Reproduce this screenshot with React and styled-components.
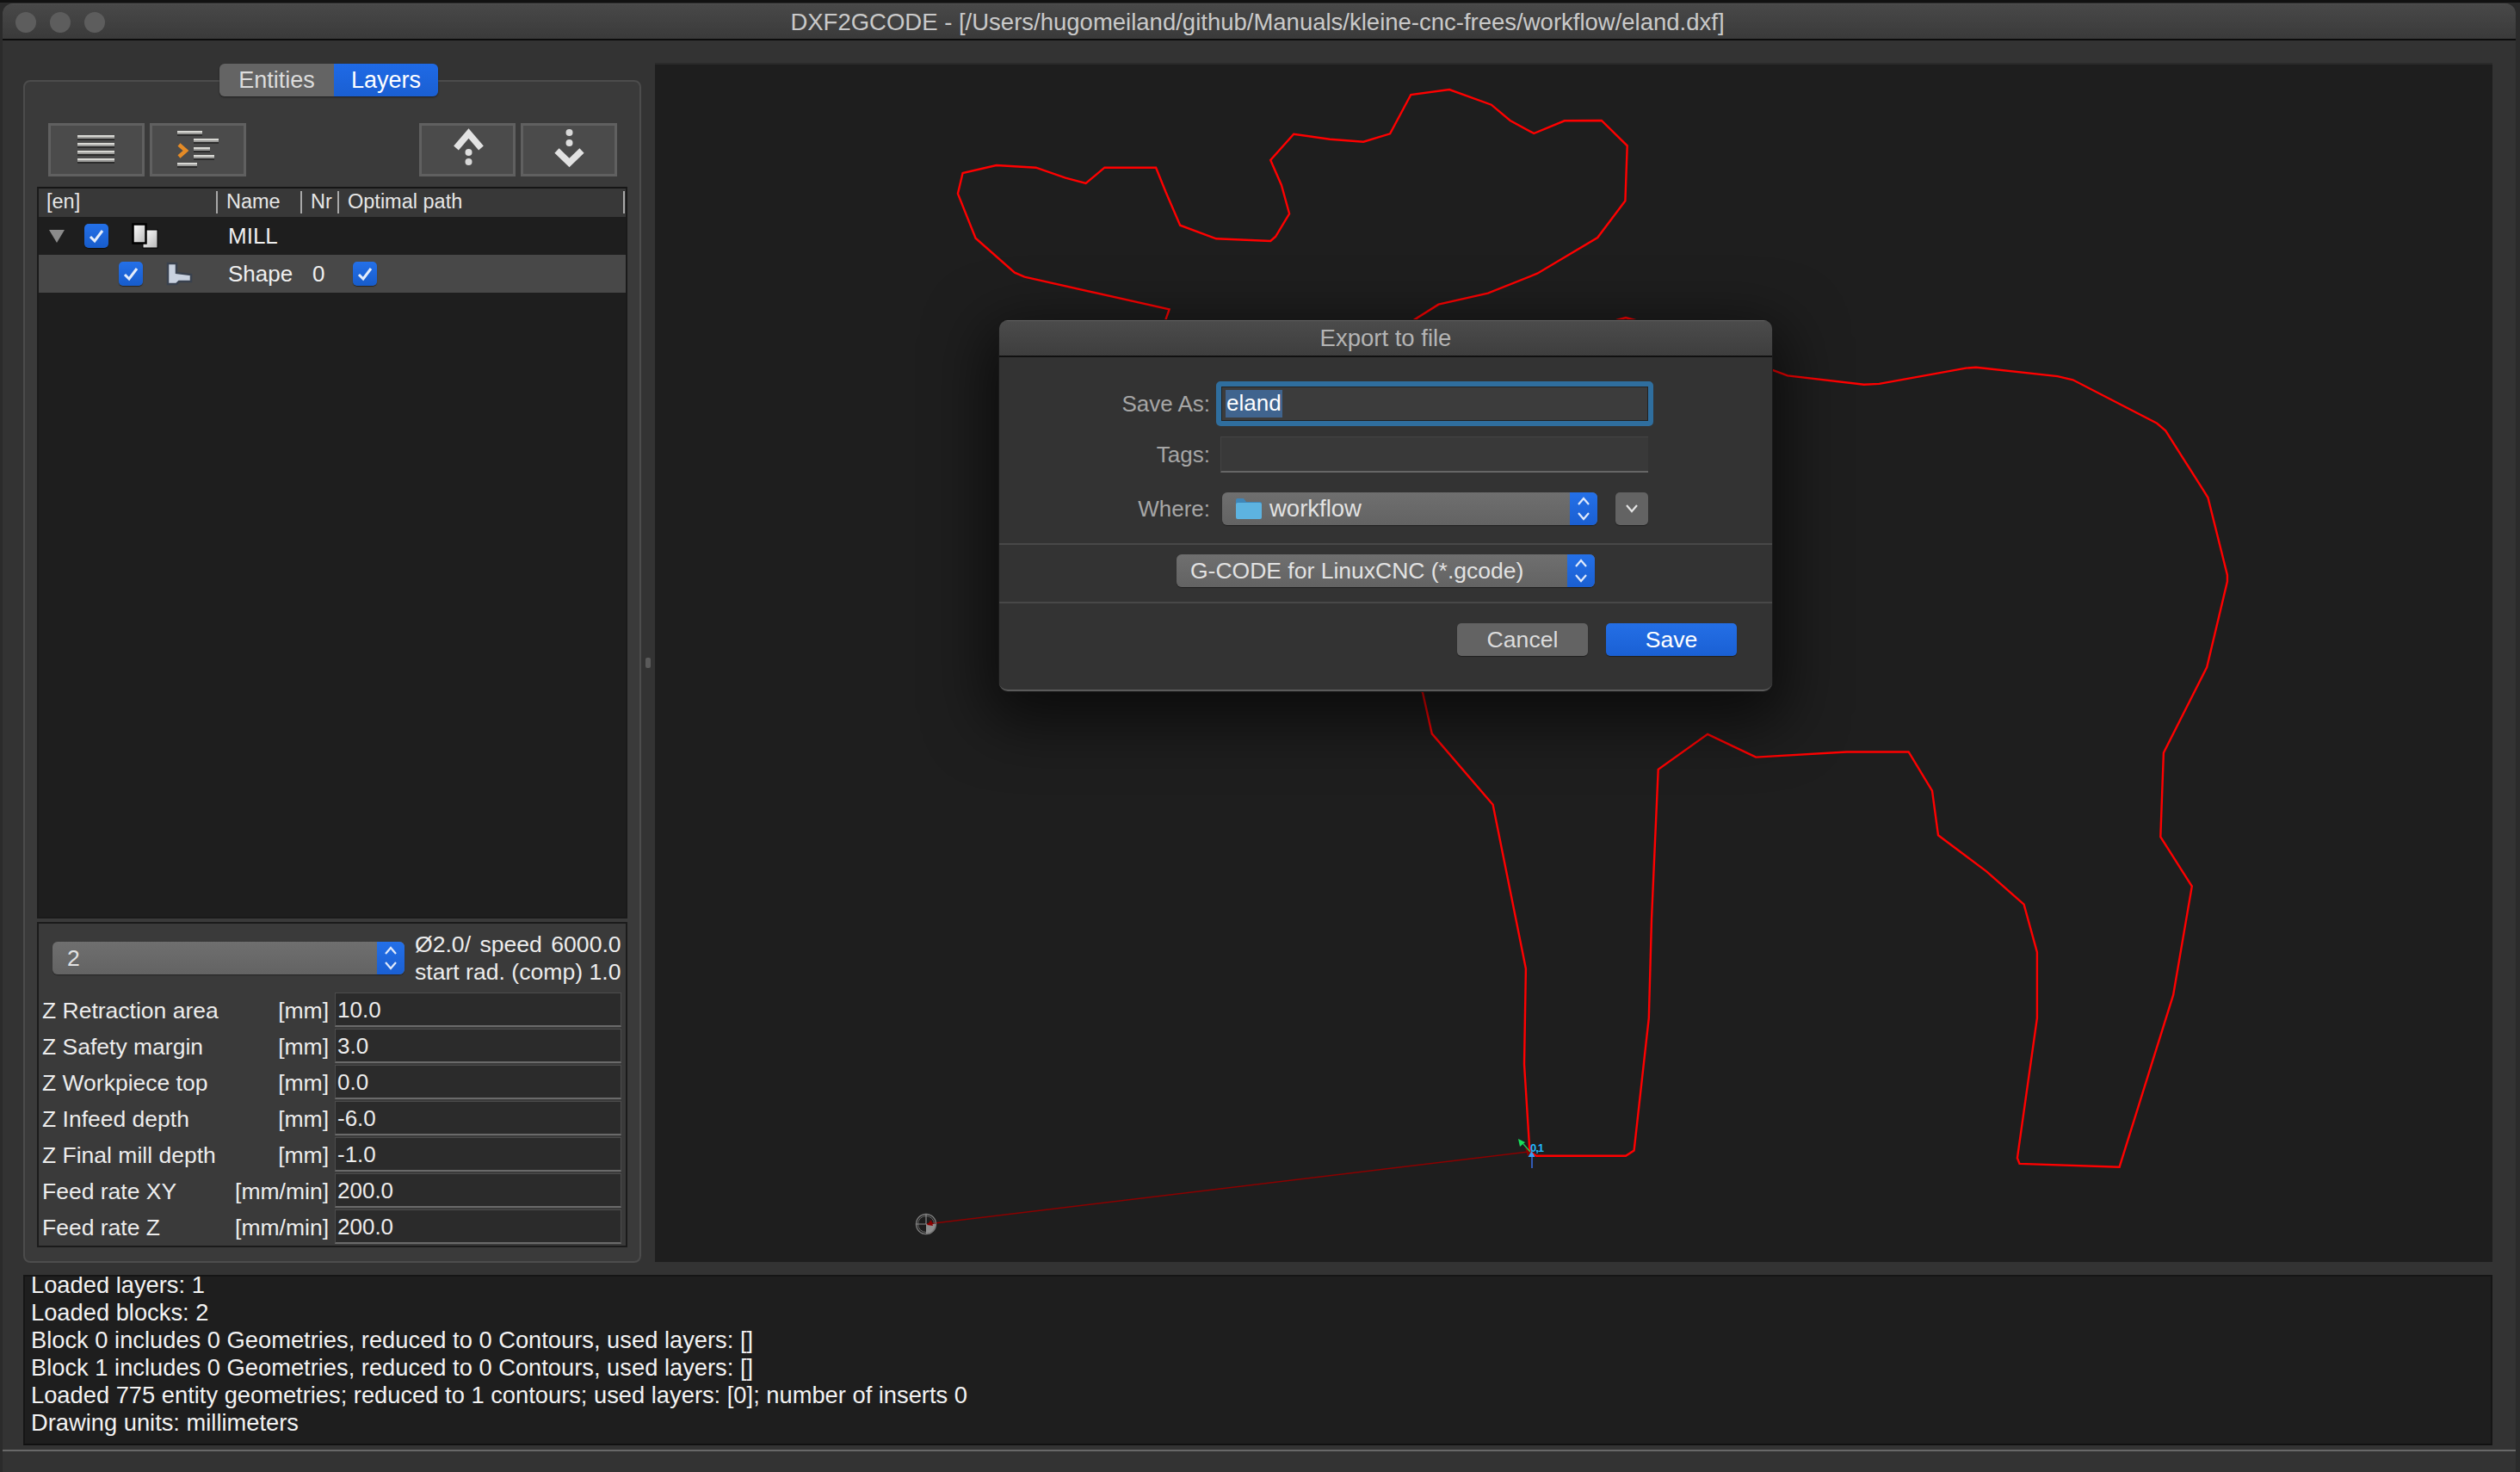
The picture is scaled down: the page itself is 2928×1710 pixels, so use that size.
import React from 'react';
import styled, { createGlobalStyle } from 'styled-components';

const Global = createGlobalStyle`
  html, body { margin: 0; padding: 0; background: #1c1c1c; }
  body { width: 2928px; height: 1710px; overflow: hidden; font-family: "Liberation Sans", Arial, sans-serif; -webkit-font-smoothing: antialiased; }
  * { box-sizing: border-box; }
`;

const Desktop = styled.div`
  width: 2928px; height: 1710px; padding: 1px 5px 0 3px; position: relative;
  background: #2b2b2b; border-top: 3px solid #111;
`;
const Win = styled.div`
  height: 100%; display: flex; flex-direction: column; background: #333; border-radius: 12px 12px 0 0; overflow: hidden;
`;
const TitleBar = styled.div`
  height: 43px; flex: none; display: grid; grid-template-columns: 1fr auto 1fr; align-items: center;
  background: linear-gradient(#505050 0, #484848 4%, #3a3a3a 100%); border-bottom: 2px solid #0c0c0c;
  padding: 3px 4px 0 0;
`;
const Lights = styled.div`display: flex; gap: 16px; padding-left: 15px;`;
const Light = styled.span`width: 24px; height: 24px; border-radius: 50%; background: #5d5d5d;`;
const Title = styled.div`font-size: 27.5px; color: #c9c9c9; white-space: nowrap;`;

const Main = styled.div`flex: 1; min-height: 0; display: flex; padding: 26px 27px 0 24px;`;
const LeftCol = styled.div`width: 718px; flex: none; display: flex; flex-direction: column; padding-top: 1px;`;
const Tabs = styled.div`
  align-self: center; display: flex; height: 38px; margin: 0 8px -19px 0; position: relative; z-index: 1;
  border-radius: 6px; overflow: hidden; box-shadow: 0 1px 2px rgba(0,0,0,.5);
`;
const Tab = styled.div`
  display: flex; align-items: center; justify-content: center; font-size: 27px; height: 100%;
  width: ${p => p.$w}px; color: ${p => p.$on ? '#fff' : '#dcdcdc'};
  background: ${p => p.$on ? 'linear-gradient(#1f6ae6,#1a5fd2)' : '#646464'};
`;
const Pane = styled.div`
  flex: 1; min-height: 0; display: flex; flex-direction: column; background: #3a3a3a;
  border: 2px solid #4c4c4c; border-radius: 8px; padding: 48px 14px 16px;
`;
const Toolbar = styled.div`display: flex; padding: 0 12px 0 13px; gap: 6px; height: 62px; flex: none;`;
const ToolGap = styled.div`flex: 1;`;
const ToolBtn = styled.div`width: 112px; height: 62px; background: #4b4b4b; border: 3px solid #606060; display: flex;`;
const Tree = styled.div`
  flex: 1; min-height: 0; margin-top: 12px; background: #1e1e1e; border: 2px solid #1a1a1a; border-top-color: #161616;
`;
const cols = '208px 98px 43px 332px';
const TreeHead = styled.div`
  height: 33px; padding-bottom: 2px; display: grid; grid-template-columns: ${cols}; background: #383838; align-items: center; font-size: 23.5px; color: #e6e6e6;
`;
const HeadCell = styled.div`
  height: 26px; line-height: 24px; padding-left: ${p => p.$pl}px; border-right: 2px solid #a8a8a8; white-space: nowrap; overflow: hidden;
`;
const TreeRow = styled.div`
  height: 44px; display: grid; grid-template-columns: ${cols}; align-items: center;
  background: ${p => p.$sel ? '#484848' : '#1e1e1e'}; font-size: 26px; color: #efefef;
`;
const Cell = styled.div`display: flex; align-items: center; padding-left: ${p => p.$pl || 0}px; gap: ${p => p.$gap || 0}px;`;
const IconSlot = styled.span`display: flex; margin-left: 4px;`;
const Tri = styled.span`
  width: 0; height: 0; border-left: 9px solid transparent; border-right: 9px solid transparent; border-top: 15px solid #8b8b8b;
`;
const CheckBox = styled.span`
  width: 28px; height: 28px; border-radius: 5px; flex: none; display: flex; align-items: center; justify-content: center;
  background: linear-gradient(#2470e8,#175ccb); box-shadow: 0 1px 1px rgba(0,0,0,.5);
`;
const Check = () => (
  <CheckBox>
    <svg width="20" height="20" viewBox="0 0 20 20"><polyline points="3,11 8,16 17,4" fill="none" stroke="#e4edfb" strokeWidth="3" /></svg>
  </CheckBox>
);

const BottomPanel = styled.div`
  flex: none; margin-top: 4px; height: 378px; background: #3a3a3a; border: 2px solid #1b1b1b; padding: 8px 4px 2px 4px;
`;
const ToolRow = styled.div`display: flex; height: 64px; align-items: center; margin-bottom: 8px; padding-left: 12px;`;
const Combo = styled.div`
  height: 38px; width: ${p => p.$w}px; flex: none; display: flex; border-radius: 6px; overflow: hidden; font-size: ${p => p.$fs || 26.5}px; color: #e2e2e2;
  background: linear-gradient(#6f6f6f,#636363); box-shadow: 0 1px 1px rgba(0,0,0,.4);
`;
const ComboText = styled.div`flex: 1; display: flex; align-items: center; gap: 9px; padding-left: ${p => p.$pl}px; white-space: nowrap;`;
const ComboArrows = styled.div`
  width: 32px; flex: none; display: flex; align-items: center; justify-content: center; background: linear-gradient(#2470e8,#1a5fd2);
`;
const Arrows = () => (
  <ComboArrows>
    <svg width="20" height="34" viewBox="0 0 20 34"><path d="M4 12 L10 5 L16 12 M4 22 L10 29 L16 22" fill="none" stroke="#dfe9fb" strokeWidth="2.2" /></svg>
  </ComboArrows>
);
const ToolInfo = styled.div`margin-left: 12px; font-size: 26.6px; line-height: 32px; color: #ececec; white-space: nowrap;`;
const InfoWide = styled.span`word-spacing: 3px;`;
const Form = styled.div`display: flex; flex-direction: column; gap: 2px;`;
const FormRow = styled.div`display: grid; grid-template-columns: 333px 333px; column-gap: 7px; height: 40px; align-items: center; font-size: 26.5px; color: #ececec;`;
const FormLabel = styled.div`display: flex; justify-content: space-between; white-space: nowrap; padding-top: 2px;`;
const FormInput = styled.div`
  height: 40px; line-height: 39px; padding-left: 2px; background: #2b2b2b; border: 1px solid #4c4c4c; border-bottom: 2px solid #6a6a6a; color: #ececec; font-size: 26px;
`;

const Splitter = styled.div`width: 16px; flex: none; display: flex; align-items: center; justify-content: center;`;
const Grip = styled.span`width: 6px; height: 12px; background: #5a5a5a; border-radius: 2px;`;
const Canvas = styled.div`flex: 1; background: #1e1e1e; margin-bottom: 1px; border-top: 2px solid #2a2a2a; display: flex;`;
const Drawing = styled.svg`display: block; width: 100%; height: 100%;`;

const Log = styled.div`
  flex: none; height: 198px; margin: 14px 27px 0 24px; background: #1e1e1e; border: 2px solid #151515; border-bottom-color: #111;
  padding: 0 0 0 7px; font-size: 27.3px; line-height: 32px; color: #f2f2f2; overflow: hidden;
`;
const LogLines = styled.div`margin-top: -6px;`;
const StatusBar = styled.div`flex: none; height: 26px; margin-top: 5px; background: #333; border-top: 2px solid #686868;`;

const Dialog = styled.div`
  position: absolute; left: 1161px; top: 369px; width: 898px; height: 431px; z-index: 5;
  display: flex; flex-direction: column; background: #333; border-radius: 10px;
  box-shadow: 0 0 0 1px #1a1a1a, 0 22px 70px 14px rgba(0,0,0,.62);
  border-bottom: 2px solid #5a5a5a; overflow: hidden;
`;
const DlgTitle = styled.div`
  height: 43px; flex: none; display: flex; align-items: center; justify-content: center; font-size: 27.5px; color: #b4b4b4;
  background: linear-gradient(#4b4b4b,#3e3e3e); border-bottom: 2px solid #111; border-top: 1px solid #666;
`;
const DlgForm = styled.div`
  flex: none; height: 218px; padding-top: 28px; display: grid; grid-template-columns: 245px 508px; column-gap: 7px;
  grid-template-rows: 52px 42px 49px; row-gap: 12px; align-content: start; border-bottom: 2px solid #484848;
`;
const DlgLabel = styled.div`
  display: flex; align-items: center; justify-content: flex-end; font-size: 26px; color: #a6a6a6; padding-top: ${p => p.$pt || 0}px;
`;
const SaveField = styled.div`
  border-radius: 5px; border: 6px solid #2f6e9e; background: #3c3c3c; display: flex; align-items: center; padding-left: 5px;
  box-shadow: inset 0 0 0 1px #222;
`;
const Selected = styled.span`background: #40648e; color: #fff; font-size: 26px; height: 32px; line-height: 31px; padding: 0 1px;`;
const TagsField = styled.div`margin: 0 6px 0 5px; background: #393939; border-top: 1px solid #444; border-left: 1px solid #444; border-bottom: 2px solid #666;`;
const WhereRow = styled.div`display: flex; justify-content: space-between; padding: 0 6px 0 7px; margin-top: 11px; height: 38px;`;
const SmallBtn = styled.div`
  width: 38px; height: 38px; border-radius: 5px; background: #636363; display: flex; align-items: center; justify-content: center; box-shadow: 0 1px 1px rgba(0,0,0,.4);
`;
const FormatSection = styled.div`
  flex: none; height: 68px; display: flex; align-items: center; justify-content: center; padding-bottom: 6px; border-bottom: 2px solid #484848;
`;
const BtnSection = styled.div`flex: 1; display: flex; justify-content: flex-end; gap: 21px; padding: 23px 41px 0 0;`;
const DlgBtn = styled.div`
  width: 152px; height: 38px; border-radius: 5px; display: flex; align-items: center; justify-content: center; font-size: 26.6px;
  color: ${p => p.$primary ? '#fff' : '#dcdcdc'};
  background: ${p => p.$primary ? 'linear-gradient(#246fe6,#1a60d4)' : '#636363'}; box-shadow: 0 1px 1px rgba(0,0,0,.4);
`;

const map = (ox, oy, sx, sy, pts) => pts.map(([x, y]) => [ox + x * sx, oy + y * sy]);
const outline = [
  ...map(1600, 800, 0.638, 0.3827, [[278,1405],[268,1140],[271,850],[211,352],[100,137],[83,12]]),
  ...map(1040, 80, 0.574, 1/3, [[548,872],[555,838],[262,725],[242,710],[163,590],[127,435],[137,363],[205,336],[285,344],[345,380],[386,399],[424,344],[528,344],[548,430],[577,545],[650,592],[760,600],[770,585],[798,505],[782,405],[760,318],[807,227],[880,245],[948,254],[1002,226],[1044,90],[1122,72],[1207,125],[1245,180],[1293,225],[1355,181],[1430,180],[1482,268],[1478,460],[1422,588],[1300,713],[1200,782],[1100,821],[1053,872]]),
  [1700,400],[1878,372],[1889,369],[1900,372],
  ...map(2000, 400, 0.592, 0.3827, [[104,80],[130,95],[280,122],[310,120],[480,72],[500,70],[660,97],[690,108],[855,240],[872,262],[945,440],[955,465],[993,700],[993,720],[953,980],[868,1240],[862,1495]]),
  ...map(1600, 800, 0.638, 0.3827, [[1484,600],[1450,930],[1352,1452],[1170,1442],[1166,1425],[1202,1000],[1202,800],[1178,655],[1110,555],[1022,445],[1011,310],[968,192],[855,192],[690,208],[602,138],[512,245],[500,700],[495,1000],[468,1402],[453,1418],[290,1418]]),
].map(p => p.map(n => n.toFixed(1)).join(',')).join(' ');

const Bar = ({ x1, x2, y }) => (
  <g>
    <rect x={x1} y={y - 3} width={x2 - x1} height="2" fill="#d8d8d4" />
    <rect x={x1} y={y - 1} width={x2 - x1} height="2" fill="#9a9a98" />
    <rect x={x1} y={y + 1} width={x2 - x1} height="2" fill="#2c2c2c" />
  </g>
);
const ListIcon = () => (
  <svg width="106" height="56" viewBox="0 0 106 56">
    {[14, 23, 32, 41].map(y => <Bar key={y} x1={31} x2={74} y={y} />)}
  </svg>
);
const IndentIcon = () => (
  <svg width="106" height="56" viewBox="0 0 106 56">
    <Bar x1={29} x2={58} y={9} />
    <Bar x1={48} x2={77} y={18} />
    <Bar x1={48} x2={67} y={28} />
    <Bar x1={48} x2={72} y={37} />
    <Bar x1={29} x2={52} y={46} />
    <polyline points="31,22 39,29 31,36" fill="none" stroke="#e58b26" strokeWidth="4.5" />
  </svg>
);
const UpIcon = () => (
  <svg width="106" height="56" viewBox="0 0 106 56">
    <path d="M40 26 L54.5 9 L69 26" fill="none" stroke="#e2e2e2" strokeWidth="7.5" />
    <circle cx="54.500" cy="31" r="4" fill="#dedede" />
    <circle cx="54.500" cy="42" r="4" fill="#d8d8d8" />
  </svg>
);
const DownIcon = () => (
  <svg width="106" height="56" viewBox="0 0 106 56">
    <circle cx="53.500" cy="8" r="4" fill="#d8d8d8" />
    <circle cx="53.500" cy="20" r="4" fill="#dedede" />
    <path d="M39 29 L53.500 43 L68 29" fill="none" stroke="#e2e2e2" strokeWidth="7.5" />
  </svg>
);
const LayersIcon = () => (
  <svg width="31" height="30" viewBox="0 0 31 30">
    <defs>
      <linearGradient id="pg" x1="0" y1="0" x2="1" y2="1"><stop offset="0" stopColor="#fff" /><stop offset="1" stopColor="#b8b8b8" /></linearGradient>
    </defs>
    <rect x="13" y="8" width="17" height="21" fill="url(#pg)" stroke="#000" strokeWidth="1" />
    <rect x="1.500" y="1.500" width="15" height="22" fill="url(#pg)" stroke="#000" strokeWidth="2.5" />
  </svg>
);
const ShapeIcon = () => (
  <svg width="31" height="28" viewBox="0 0 31 28">
    <path d="M2 2 H12 V13 L29 15 V23 H15 L12 26 H2 Z" fill="#c9d2e0" stroke="#39414e" strokeWidth="2.5" />
  </svg>
);
const FolderIcon = () => (
  <svg width="30" height="24" viewBox="0 0 30 24">
    <path d="M0 2 a2 2 0 0 1 2-2 H9 L12 4 H28 a2 2 0 0 1 2 2 V8 H0 Z" fill="#3f86b8" />
    <rect x="0" y="5" width="30" height="19" rx="2" fill="#5db3e0" />
  </svg>
);
const Origin = () => (
  <g>
    <circle cx="1076" cy="1422" r="11.5" fill="none" stroke="#7d7d7d" strokeWidth="1.4" />
    <circle cx="1076" cy="1422" r="9.5" fill="none" stroke="#6a6a6a" strokeWidth="1" />
    <path d="M1076 1422 H1087 A11 11 0 0 1 1076 1433 Z" fill="#8f8f8f" />
    <path d="M1064 1422 H1076 M1076 1410 V1422" stroke="#8a8a8a" strokeWidth="1.2" />
    <path d="M1077 1423 L1082 1417 L1084 1424 Z" fill="#8b0000" />
  </g>
);

const params = [
  ['Z Retraction area', '[mm]', '10.0'],
  ['Z Safety margin', '[mm]', '3.0'],
  ['Z Workpiece top', '[mm]', '0.0'],
  ['Z Infeed depth', '[mm]', '-6.0'],
  ['Z Final mill depth', '[mm]', '-1.0'],
  ['Feed rate XY', '[mm/min]', '200.0'],
  ['Feed rate Z', '[mm/min]', '200.0'],
];
const logs = [
  'Loaded layers: 1',
  'Loaded blocks: 2',
  'Block 0 includes 0 Geometries, reduced to 0 Contours, used layers: []',
  'Block 1 includes 0 Geometries, reduced to 0 Contours, used layers: []',
  'Loaded 775 entity geometries; reduced to 1 contours; used layers: [0]; number of inserts 0',
  'Drawing units: millimeters',
];

export default function App() {
  return (
    <Desktop>
      <Global />
      <Win>
        <TitleBar>
          <Lights><Light /><Light /><Light /></Lights>
          <Title>DXF2GCODE - [/Users/hugomeiland/github/Manuals/kleine-cnc-frees/workflow/eland.dxf]</Title>
          <div />
        </TitleBar>
        <Main>
          <LeftCol>
            <Tabs>
              <Tab $w={133}>Entities</Tab>
              <Tab $w={121} $on>Layers</Tab>
            </Tabs>
            <Pane>
              <Toolbar>
                <ToolBtn><ListIcon /></ToolBtn>
                <ToolBtn><IndentIcon /></ToolBtn>
                <ToolGap />
                <ToolBtn><UpIcon /></ToolBtn>
                <ToolBtn><DownIcon /></ToolBtn>
              </Toolbar>
              <Tree>
                <TreeHead>
                  <HeadCell $pl={9}>[en]</HeadCell>
                  <HeadCell $pl={10}>Name</HeadCell>
                  <HeadCell $pl={10}>Nr</HeadCell>
                  <HeadCell $pl={10}>Optimal path</HeadCell>
                </TreeHead>
                <TreeRow>
                  <Cell $pl={12} $gap={23}><Tri /><Check /><IconSlot><LayersIcon /></IconSlot></Cell>
                  <Cell $pl={12}>MILL</Cell>
                  <Cell />
                  <Cell />
                </TreeRow>
                <TreeRow $sel>
                  <Cell $pl={93} $gap={27}><Check /><ShapeIcon /></Cell>
                  <Cell $pl={12}>Shape</Cell>
                  <Cell $pl={12}>0</Cell>
                  <Cell $pl={16}><Check /></Cell>
                </TreeRow>
              </Tree>
              <BottomPanel>
                <ToolRow>
                  <Combo $w={409}><ComboText $pl={17}>2</ComboText><Arrows /></Combo>
                  <ToolInfo><InfoWide>Ø2.0/ speed 6000.0</InfoWide><br />start rad. (comp) 1.0</ToolInfo>
                </ToolRow>
                <Form>
                  {params.map(([label, unit, value]) => (
                    <FormRow key={label}>
                      <FormLabel><span>{label}</span><span>{unit}</span></FormLabel>
                      <FormInput>{value}</FormInput>
                    </FormRow>
                  ))}
                </Form>
              </BottomPanel>
            </Pane>
          </LeftCol>
          <Splitter><Grip /></Splitter>
          <Canvas>
            <Drawing viewBox="761 75 2135 1391">
              <line x1="1077" y1="1422" x2="1776" y2="1338" stroke="#8b0000" strokeWidth="1.6" />
              <polygon points={outline} fill="none" stroke="#ff0000" strokeWidth="2.4" />
              <Origin />
              <path d="M1772 1333 L1779 1338 L1775 1343 Z" fill="#8b0000" />
              <line x1="1770" y1="1329" x2="1778" y2="1338" stroke="#1fd65a" strokeWidth="1.2" />
              <path d="M1764 1323 L1772 1327 L1766 1332 Z" fill="#18e05c" />
              <line x1="1780" y1="1342" x2="1780" y2="1357" stroke="#3a6fe8" strokeWidth="1.5" />
              <path d="M1779.500 1337 L1783.500 1344 L1775.500 1344 Z" fill="#3aa0f5" />
              <text x="1778" y="1338" fontSize="13" fontWeight="700" letterSpacing="-1" fill="#22b8ff" fontFamily="Liberation Sans">0,1</text>
            </Drawing>
          </Canvas>
        </Main>
        <Log><LogLines>{logs.map(l => <div key={l}>{l}</div>)}</LogLines></Log>
        <StatusBar />
      </Win>
      <Dialog>
        <DlgTitle>Export to file</DlgTitle>
        <DlgForm>
          <DlgLabel>Save As:</DlgLabel>
          <SaveField><Selected>eland</Selected></SaveField>
          <DlgLabel>Tags:</DlgLabel>
          <TagsField />
          <DlgLabel $pt={11}>Where:</DlgLabel>
          <WhereRow>
            <Combo $w={436} $fs={27.5}><ComboText $pl={16}><FolderIcon />workflow</ComboText><Arrows /></Combo>
            <SmallBtn>
              <svg width="18" height="12" viewBox="0 0 18 12"><path d="M3 2 L9 9 L15 2" fill="none" stroke="#e4e4e4" strokeWidth="2.2" /></svg>
            </SmallBtn>
          </WhereRow>
        </DlgForm>
        <FormatSection>
          <Combo $w={486}><ComboText $pl={16}>G-CODE for LinuxCNC (*.gcode)</ComboText><Arrows /></Combo>
        </FormatSection>
        <BtnSection>
          <DlgBtn>Cancel</DlgBtn>
          <DlgBtn $primary>Save</DlgBtn>
        </BtnSection>
      </Dialog>
    </Desktop>
  );
}
